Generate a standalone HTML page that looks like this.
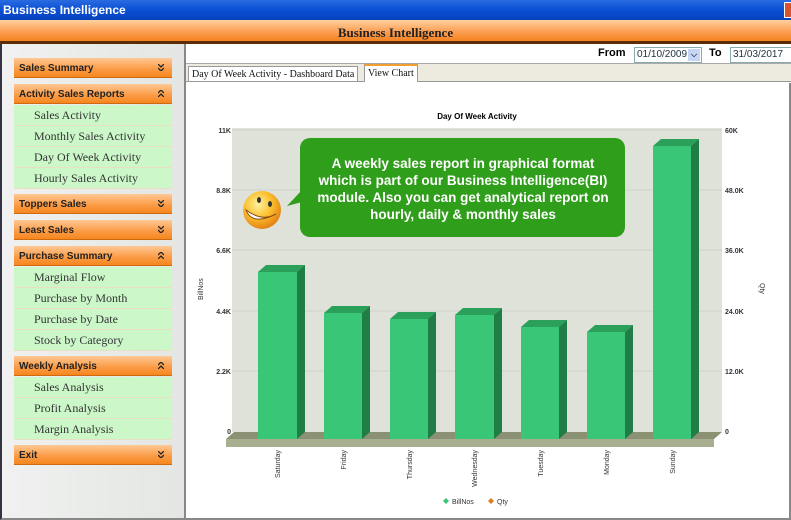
<!DOCTYPE html>
<html><head><meta charset="utf-8"><style>
*{margin:0;padding:0;box-sizing:border-box}
body{width:791px;height:520px;overflow:hidden;background:#fff;font-family:"Liberation Sans",sans-serif;position:relative}
.title{position:absolute;left:0;top:0;width:791px;height:20px;background:linear-gradient(#2a6be0,#0a4fd6 50%,#0842b8);color:#fff;font:bold 12px "Liberation Sans",sans-serif;padding:3px 0 0 3px}
.close{position:absolute;right:0;top:2px;width:7px;height:16px;background:#d9532f;border:1px solid #fff;border-right:none}
.hdr{position:absolute;left:0;top:20px;width:791px;height:24px;background:linear-gradient(#ffd2a0,#fca35a 50%,#f58220);border-bottom:3px solid #5a2c08;text-align:center;font:bold 13px "Liberation Serif",serif;padding-top:5px;color:#222}
.side{position:absolute;left:0;top:44px;width:186px;height:476px;background:linear-gradient(90deg,#f0f1f0,#e3e6e3);border-left:2px solid #334;border-right:2px solid #888;border-bottom:2px solid #888}
.h{position:absolute;left:14px;width:158px;height:20px;background:linear-gradient(#ffc894,#fb9a44 60%,#f5871f);font:bold 10px "Liberation Sans",sans-serif;padding:5px 0 0 5px;color:#222;border-bottom:1px solid #d06a10}
.h svg{position:absolute;right:8px;top:6px}
.i{position:absolute;left:14px;width:158px;height:21px;background:#ccf7c9;border-bottom:1px solid #eadfc0;font:12px "Liberation Serif",serif;padding:3px 0 0 20px;color:#333}
.top{position:absolute;left:186px;top:44px;width:605px;height:20px;background:#fff;border-bottom:1px solid #aaa;font:bold 11px "Liberation Sans",sans-serif}
.sel{position:absolute;top:3px;height:16px;border:1px solid #8aa;background:#fff;font:10px "Liberation Sans",sans-serif;color:#234;padding:1px 2px;overflow:hidden;white-space:nowrap}
.sel b{position:absolute;right:1px;top:1px;width:12px;height:12px;background:#c5d6f5;font-size:8px;color:#335;text-align:center;line-height:12px}
.tabs{position:absolute;left:186px;top:64px;width:605px;height:18px;background:#edeae0;border-bottom:1px solid #999}
.tab{position:absolute;top:2px;height:17px;font:10px "Liberation Serif",serif;padding:2px 3px;color:#111;border:1px solid #999;background:#fff}
.main{position:absolute;left:186px;top:83px;width:605px;height:437px;border-right:2px solid #888;border-bottom:2px solid #888}
</style></head><body>
<div class="title">Business Intelligence</div><div class="close"></div>
<div class="hdr">Business Intelligence</div>
<div class="side"></div>
<div class="h" style="top:58px">Sales Summary<svg width="6" height="7"><path d="M0,0 3,3 6,0M0,4 3,7 6,4" fill="none" stroke="#222" stroke-width="1.3"/></svg></div>
<div class="h" style="top:84px">Activity Sales Reports<svg width="6" height="7"><path d="M0,3 3,0 6,3M0,7 3,4 6,7" fill="none" stroke="#222" stroke-width="1.3"/></svg></div>
<div class="i" style="top:105px">Sales Activity</div>
<div class="i" style="top:126px">Monthly Sales Activity</div>
<div class="i" style="top:147px">Day Of Week Activity</div>
<div class="i" style="top:168px">Hourly Sales Activity</div>
<div class="h" style="top:194px">Toppers Sales<svg width="6" height="7"><path d="M0,0 3,3 6,0M0,4 3,7 6,4" fill="none" stroke="#222" stroke-width="1.3"/></svg></div>
<div class="h" style="top:220px">Least Sales<svg width="6" height="7"><path d="M0,0 3,3 6,0M0,4 3,7 6,4" fill="none" stroke="#222" stroke-width="1.3"/></svg></div>
<div class="h" style="top:246px">Purchase Summary<svg width="6" height="7"><path d="M0,3 3,0 6,3M0,7 3,4 6,7" fill="none" stroke="#222" stroke-width="1.3"/></svg></div>
<div class="i" style="top:267px">Marginal Flow</div>
<div class="i" style="top:288px">Purchase by Month</div>
<div class="i" style="top:309px">Purchase by Date</div>
<div class="i" style="top:330px">Stock by Category</div>
<div class="h" style="top:356px">Weekly Analysis<svg width="6" height="7"><path d="M0,3 3,0 6,3M0,7 3,4 6,7" fill="none" stroke="#222" stroke-width="1.3"/></svg></div>
<div class="i" style="top:377px">Sales Analysis</div>
<div class="i" style="top:398px">Profit Analysis</div>
<div class="i" style="top:419px">Margin Analysis</div>
<div class="h" style="top:445px">Exit<svg width="6" height="7"><path d="M0,0 3,3 6,0M0,4 3,7 6,4" fill="none" stroke="#222" stroke-width="1.3"/></svg></div>
<div class="top"><span style="position:absolute;left:412px;top:3px">From</span>
<div class="sel" style="left:448px;width:68px">01/10/2009<b>&#x2335;</b></div>
<span style="position:absolute;left:523px;top:3px">To</span>
<div class="sel" style="left:544px;width:62px">31/03/2017</div></div>
<div class="tabs"><div class="tab" style="left:2px;top:2px;height:16px">Day Of Week Activity - Dashboard Data</div>
<div class="tab" style="left:178px;top:0;height:18px;border-top:2px solid #f0a030;border-bottom:none">View Chart</div></div>
<div class="main"></div>
<svg style="position:absolute;left:0;top:0" width="791" height="520" font-family="Liberation Sans,sans-serif">
<text x="477" y="119" font-size="8" font-weight="bold" text-anchor="middle">Day Of Week Activity</text>
<rect x="232" y="128" width="490" height="304" fill="#dfe2d9"/>
<g stroke="#cfd2c8" stroke-width="1">
<line x1="232" y1="130" x2="722" y2="130"/><line x1="232" y1="190" x2="722" y2="190"/><line x1="232" y1="250" x2="722" y2="250"/><line x1="232" y1="311" x2="722" y2="311"/><line x1="232" y1="371" x2="722" y2="371"/></g>
<polygon points="226,439 234,432 722,432 714,439" fill="#8b9274"/>
<rect x="226" y="439" width="488" height="8" fill="#a8ae90"/>
<g font-size="7" font-weight="bold" fill="#333" text-anchor="end">
<text x="231" y="133">11K</text><text x="231" y="193">8.8K</text><text x="231" y="253">6.6K</text><text x="231" y="314">4.4K</text><text x="231" y="374">2.2K</text><text x="231" y="434">0</text></g>
<g font-size="7" font-weight="bold" fill="#333">
<text x="725" y="133">60K</text><text x="725" y="193">48.0K</text><text x="725" y="253">36.0K</text><text x="725" y="314">24.0K</text><text x="725" y="374">12.0K</text><text x="725" y="434">0</text></g>
<text transform="translate(203,300) rotate(-90)" font-size="7" fill="#333">BillNos</text>
<text transform="translate(760,283) rotate(90)" font-size="7" fill="#333">Qty</text>
<g>
<g><polygon points="258,272 266,265 305,265 297,272" fill="#2aa05a"/><polygon points="297,272 305,265 305,432 297,439" fill="#1f7d45"/><rect x="258" y="272" width="39" height="167" fill="#3ac677"/></g>
<g><polygon points="324,313 332,306 370,306 362,313" fill="#2aa05a"/><polygon points="362,313 370,306 370,432 362,439" fill="#1f7d45"/><rect x="324" y="313" width="38" height="126" fill="#3ac677"/></g>
<g><polygon points="390,319 398,312 436,312 428,319" fill="#2aa05a"/><polygon points="428,319 436,312 436,432 428,439" fill="#1f7d45"/><rect x="390" y="319" width="38" height="120" fill="#3ac677"/></g>
<g><polygon points="455,315 463,308 502,308 494,315" fill="#2aa05a"/><polygon points="494,315 502,308 502,432 494,439" fill="#1f7d45"/><rect x="455" y="315" width="39" height="124" fill="#3ac677"/></g>
<g><polygon points="521,327 529,320 567,320 559,327" fill="#2aa05a"/><polygon points="559,327 567,320 567,432 559,439" fill="#1f7d45"/><rect x="521" y="327" width="38" height="112" fill="#3ac677"/></g>
<g><polygon points="587,332 595,325 633,325 625,332" fill="#2aa05a"/><polygon points="625,332 633,325 633,432 625,439" fill="#1f7d45"/><rect x="587" y="332" width="38" height="107" fill="#3ac677"/></g>
<g><polygon points="653,146 661,139 699,139 691,146" fill="#2aa05a"/><polygon points="691,146 699,139 699,432 691,439" fill="#1f7d45"/><rect x="653" y="146" width="38" height="293" fill="#3ac677"/></g>
</g>
<g font-size="7" fill="#333">
<text transform="translate(280,450) rotate(-90)" text-anchor="end">Saturday</text>
<text transform="translate(346,450) rotate(-90)" text-anchor="end">Friday</text>
<text transform="translate(412,450) rotate(-90)" text-anchor="end">Thursday</text>
<text transform="translate(477,450) rotate(-90)" text-anchor="end">Wednesday</text>
<text transform="translate(543,450) rotate(-90)" text-anchor="end">Tuesday</text>
<text transform="translate(609,450) rotate(-90)" text-anchor="end">Monday</text>
<text transform="translate(675,450) rotate(-90)" text-anchor="end">Sunday</text>
</g>
<polygon points="446,498 449,501 446,504 443,501" fill="#3ac677"/><text x="452" y="504" font-size="7" fill="#333">BillNos</text>
<polygon points="491,498 494,501 491,504 488,501" fill="#e07a20"/><text x="497" y="504" font-size="7" fill="#333">Qty</text>
<rect x="300" y="138" width="325" height="99" rx="10" fill="#2f9e1a"/>
<polygon points="302,190 287,206 302,202" fill="#2f9e1a"/>
<g font-size="13.5" font-weight="bold" fill="#fff" text-anchor="middle">
<text x="463" y="168">A weekly sales report in graphical format</text>
<text x="463" y="185">which is part of our Business Intelligence(BI)</text>
<text x="463" y="202">module. Also you can get analytical report on</text>
<text x="463" y="219">hourly, daily &amp; monthly sales</text></g>
<defs><radialGradient id="sg" cx="0.4" cy="0.35" r="0.7"><stop offset="0" stop-color="#fff3a0"/><stop offset="0.5" stop-color="#fbc030"/><stop offset="1" stop-color="#e07a10"/></radialGradient></defs>
<circle cx="262" cy="210" r="19" fill="url(#sg)"/>
<ellipse cx="259" cy="200" rx="2" ry="3" fill="#333"/><ellipse cx="270" cy="204" rx="2" ry="3" fill="#333"/>
<path d="M246,210 Q252,226 276,214 Q262,222 246,210Z" fill="#fff" stroke="#8a4a10" stroke-width="1"/>
</svg>
</body></html>
